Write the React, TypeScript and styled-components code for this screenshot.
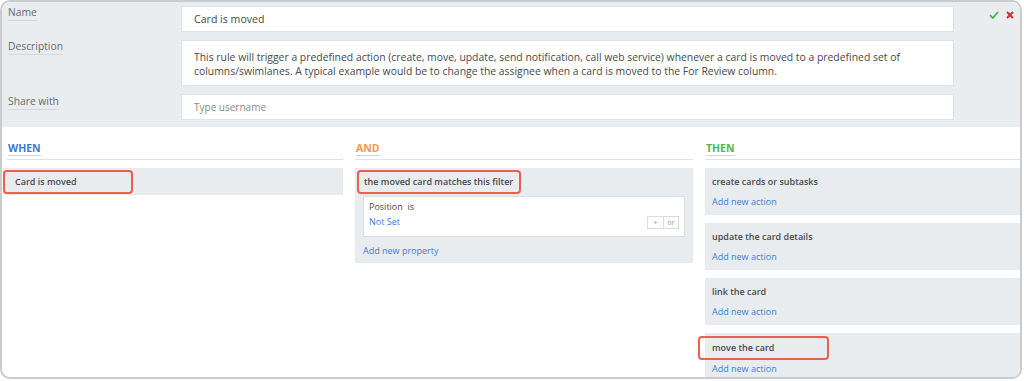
import React from "react";
import styled, {createGlobalStyle} from "styled-components";

const colors = {
  border: "#c9cbcd",
  band: "#e9edf0",
  block: "#e9ecef",
  line: "#dbe2e8",
  text: "#4a4a4a",
  label: "#6a6a6a",
  link: "#3b7dd8",
  when: "#3d7bc8",
  and: "#f39a4a",
  then: "#4cb84e",
  mark: "#e8604e",
  ok: "#4caf50",
  cancel: "#d1283a",
};

const GlobalStyle = createGlobalStyle`
  * { box-sizing: border-box; }
  body {
    margin: 0;
    background: #fff;
    font-family: "Open Sans", "Liberation Sans", sans-serif;
  }
`;

const Frame = styled.div`
  width: 1022px;
  height: 379px;
  border: 2px solid ${colors.border};
  border-radius: 10px;
  overflow: hidden;
  background: #fff;
`;

const Band = styled.div`
  background: ${colors.band};
  padding: 4px 0 7px 6px;
  display: grid;
  grid-template-columns: 173px 773px 1fr;
  row-gap: 8px;
`;

const Label = styled.div<{ $shift?: number }>`
  align-self: start;
  margin-top: ${p => p.$shift ?? 0}px;
  font-size: 10.3px;
  line-height: 14px;
  color: ${colors.label};

  span {
    display: inline-block;
    padding-bottom: 1px;
    border-bottom: 1px solid #d3d8dc;
  }
`;

const Field = styled.div<{ $tall?: boolean }>`
  background: #fff;
  border: 1px solid #dfe3e6;
  height: ${p => (p.$tall ? "46px" : "26px")};
  padding: ${p => (p.$tall ? "9px 12px" : "0 12px")};
  display: flex;
  align-items: ${p => (p.$tall ? "flex-start" : "center")};
  font-size: ${p => (p.$tall ? "10.4px" : "10.6px")};
  line-height: 14px;
  color: ${colors.text};
`;

const Placeholder = styled.span`
  color: #8a8a8a;
  font-size: 10px;
`;

const Actions = styled.div`
  display: flex;
  justify-content: flex-end;
  gap: 7px;
  padding: 5px 6px 0 0;
`;

const Body = styled.div`
  display: flex;
  gap: 12px;
  padding: 14px 0 0 1px;
`;

const Column = styled.div<{ $w?: number }>`
  width: ${p => (p.$w ? `${p.$w}px` : "auto")};
  flex: ${p => (p.$w ? "none" : "1")};
  display: flex;
  flex-direction: column;
  gap: 8px;
`;

const Heading = styled.div<{ $color: string; $inset?: number }>`
  margin-left: ${p => p.$inset || 0}px;
  padding: 0 0 3px 1px;
  border-bottom: 1px solid ${colors.line};
  font-size: 10.5px;
  line-height: 14px;
  font-weight: 700;
  color: ${p => p.$color};

  span {
    display: inline-block;
    border-bottom: 1px solid #cfd6dc;
  }
`;

const Row = styled.div`
  background: ${colors.block};
  height: 27px;
  padding-top: 2px;
`;

const Title = styled.div`
  font-size: 9px;
  line-height: 14px;
  font-weight: 600;
  color: ${colors.text};
`;

const Marked = styled(Title)<{ $w: number; $pad: number; $ml?: number }>`
  width: ${p => p.$w}px;
  height: 24px;
  margin-left: ${p => p.$ml ?? 0}px;
  padding: 3px 0 0 ${p => p.$pad}px;
  border: 2px solid ${colors.mark};
  border-radius: 4px;
`;

const Block = styled.div`
  background: ${colors.block};
  height: 47px;
  padding: 7px 7px 0;
  display: flex;
  flex-direction: column;
  gap: 6px;
  flex: none;
`;

const LastBlock = styled(Block)`
  padding-top: 3px;
  gap: 2px;
`;

const FilterBlock = styled.div`
  background: ${colors.block};
  height: 95px;
  padding: 2px 8px 0;
`;

const Link = styled.a`
  display: block;
  font-size: 9px;
  line-height: 14px;
  color: ${colors.link};
  cursor: pointer;
`;

const Condition = styled.div`
  background: #fff;
  border: 1px solid #dadfe3;
  margin: 2px 0 7px;
  height: 41px;
  padding: 1px 5px 0;
  font-size: 9px;
  line-height: 17px;
  color: ${colors.text};
`;

const ValueRow = styled.div`
  display: flex;
  align-items: center;
  justify-content: space-between;
`;

const Switch = styled.div`
  display: flex;
  border: 1px solid #dcdcdc;
  height: 13px;
`;

const SwitchCell = styled.span`
  width: 15px;
  font-size: 7px;
  line-height: 11px;
  text-align: center;
  color: #999;

  & + & {
    border-left: 1px solid #dcdcdc;
  }
`;

const thenActions = [
  "create cards or subtasks",
  "update the card details",
  "link the card",
];

export default function App() {
  return (
    <>
      <GlobalStyle/>
      <Frame>
        <Band>
          <Label $shift={-1}><span>Name</span></Label>
          <Field>Card is moved</Field>
          <Actions>
            <svg width="10" height="8" viewBox="0 0 10 8">
              <path d="M1 4.2 L3.8 7 L9 1" fill="none" stroke={colors.ok} strokeWidth="1.8"/>
            </svg>
            <svg width="8" height="8" viewBox="0 0 8 8">
              <path d="M1 1 L7 7 M7 1 L1 7" fill="none" stroke={colors.cancel} strokeWidth="1.9"/>
            </svg>
          </Actions>

          <Label $shift={-1}><span>Description</span></Label>
          <Field $tall>
            This rule will trigger a predefined action (create, move, update, send notification, call web service) whenever a card is moved to a predefined set of columns/swimlanes. A typical example would be to change the assignee when a card is moved to the For Review column.
          </Field>
          <div/>

          <Label><span>Share with</span></Label>
          <Field><Placeholder>Type username</Placeholder></Field>
          <div/>
        </Band>

        <Body>
          <Column $w={340}>
            <Heading $color={colors.when} $inset={4}><span>WHEN</span></Heading>
            <Row>
              <Marked $w={130} $pad={10}>Card is moved</Marked>
            </Row>
          </Column>

          <Column $w={338}>
            <Heading $color={colors.and}><span>AND</span></Heading>
            <FilterBlock>
              <Marked $w={164} $pad={5} $ml={-6}>the moved card matches this filter</Marked>
              <Condition>
                <div>Position&nbsp; is</div>
                <ValueRow>
                  <Link>Not Set</Link>
                  <Switch>
                    <SwitchCell>+</SwitchCell>
                    <SwitchCell>or</SwitchCell>
                  </Switch>
                </ValueRow>
              </Condition>
              <Link>Add new property</Link>
            </FilterBlock>
          </Column>

          <Column>
            <Heading $color={colors.then}><span>THEN</span></Heading>
            {thenActions.map(a => (
              <Block key={a}>
                <Title>{a}</Title>
                <Link>Add new action</Link>
              </Block>
            ))}
            <LastBlock>
              <Marked $w={131} $pad={12} $ml={-14}>move the card</Marked>
              <Link>Add new action</Link>
            </LastBlock>
          </Column>
        </Body>
      </Frame>
    </>
  );
}
